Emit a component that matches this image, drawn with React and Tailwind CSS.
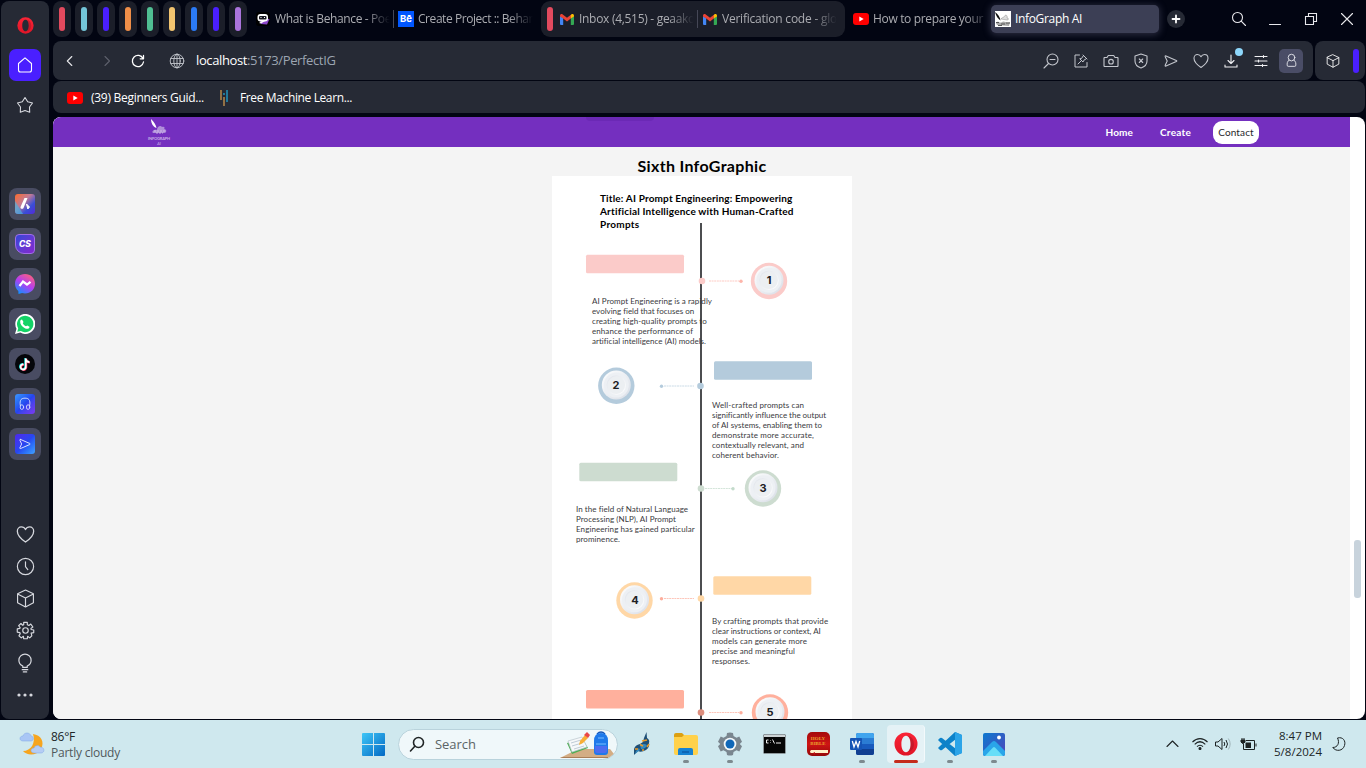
import React, { useLayoutEffect, useRef, useState } from "react";

/* Text run whose tracking is adjusted so that it fills the given width. */
function Fit({ w, className = "", children }) {
  const ref = useRef(null);
  const [sp, setSp] = useState(0);
  useLayoutEffect(() => {
    const natural = ref.current.getBoundingClientRect().width;
    setSp((w - natural) / children.length);
  }, [w, children]);
  return (
    <span ref={ref} className={`inline-block whitespace-pre ${className}`} style={{ letterSpacing: sp ? `${sp}px` : undefined }}>
      {children}
    </span>
  );
}

function Line({ size = 18, sw = 1.1, className = "", children, vb = 18 }) {
  return (
    <svg width={size} height={size} viewBox={`0 0 ${vb} ${vb}`} fill="none" stroke="currentColor" strokeWidth={sw} strokeLinecap="round" strokeLinejoin="round" className={`shrink-0 ${className}`}>
      {children}
    </svg>
  );
}

const Heart = ({ size }) => (
  <Line size={size}><path d="M9 15.500C4 12 2 9.500 2 6.200C2 4 3.600 2.500 5.400 2.500C7 2.500 8.300 3.300 9 4.800C9.700 3.300 11 2.500 12.600 2.500C14.400 2.500 16 4 16 6.200C16 9.500 14 12 9 15.500Z" /></Line>
);
const Cube = ({ size }) => (
  <Line size={size}><path d="M9 1L16.500 4.500V13L9 17L1.500 13V4.500ZM1.500 4.700L9 8.500L16.500 4.700M9 8.500V17" /></Line>
);
const Send = ({ size, className }) => (
  <Line size={size} className={className}><path d="M4 3.900L14.300 8.400C15 8.800 15 9.200 14.300 9.600L4 14.100C3.400 14.300 3 13.900 3.200 13.300L5.200 9L3.200 4.700C3 4.100 3.400 3.700 4 3.900Z" /></Line>
);
const OperaRing = ({ size }) => (
  <svg width={size} height={size} viewBox="0 0 24 24">
    <defs><linearGradient id="og" x1="0" y1="0" x2="0" y2="1"><stop stopColor="#fa2436" /><stop offset="1" stopColor="#e01527" /></linearGradient></defs>
    <path fillRule="evenodd" fill="url(#og)" d="M12 .5a11.500 11.500 0 1 0 0 23a11.500 11.500 0 1 0 0-23ZM12 3.800c3 0 4.600 3.700 4.600 8.200s-1.600 8.200-4.600 8.200s-4.600-3.700-4.600-8.200s1.600-8.200 4.600-8.200Z" />
    <path fill="#8f1422" opacity=".4" d="M13.500 4.200c2 .8 3.100 4 3.100 7.800s-1.100 7-3.100 7.800c3.500.6 6.500-3 6.500-7.800s-3-8.400-6.500-7.800Z" />
  </svg>
);
const YouTube = () => (
  <svg width="16" height="12" viewBox="0 0 16 12" className="shrink-0"><rect width="16" height="12" rx="3" fill="#f00" /><path d="M6.300 3.500L10.700 6L6.300 8.500Z" fill="#fff" /></svg>
);
const Gmail = () => (
  <svg width="14" height="11" viewBox="0 0 14 11" className="shrink-0">
    <path d="M0 2V10a1 1 0 0 0 1 1H3.200V4.300Z" fill="#4285f4" /><path d="M14 2V10a1 1 0 0 1-1 1H10.800V4.300Z" fill="#34a853" />
    <path d="M0 1.800C0 .2 1.600-.4 2.700.5L7 3.700L11.300.5L10.800 4.600L7 7.500L3.200 4.600L0 2.500Z" fill="#ea4335" /><path d="M10.800 4.600V.9L11.300.5C12.400-.4 14 .2 14 1.800V2.500Z" fill="#fbbc04" />
  </svg>
);
const SiteIcon = () => (
  <svg width="16" height="16" viewBox="0 0 16 16" className="shrink-0"><rect width="16" height="16" fill="#fff" /><path d="M0 1C3 3 5 6 5.500 9.500C3 8 1 5 0 1Z" fill="#111" /><path d="M6 8C7 6 8 7 9 6C10 3 13 4 12 7C14 7 14 9 12 9Z" fill="#ddd" stroke="#888" strokeWidth=".5" /><path d="M1 12C3 9 5 13 7 11C9 9 12 13 15 11L14 15L2 14Z" fill="#aaa" /><path d="M1 11.500H4M6 13H10M11 12H15M3 14.500H7" stroke="#555" /></svg>
);

const BARS = ["bg-[#e24a5e]", "bg-[#74c5d8]", "bg-[#4a1fff]", "bg-[#ef8e48]", "bg-[#50bf93]", "bg-[#f2c46f]", "bg-[#2b7bf6]", "bg-[#4a1fff]", "bg-[#aa74dc]"];

const Fade = ({ w, children, cls = "w-[116px]" }) => (
  <div className={`overflow-hidden whitespace-nowrap text-[#abacb1] [mask-image:linear-gradient(to_right,black_78%,transparent_99%)] ${cls}`}><Fit w={w}>{children}</Fit></div>
);

function TabStrip() {
  return (
    <div className="flex h-[41px] items-start pt-px text-[12px]">
      <div className="flex gap-1">
        {BARS.map((c, i) => (
          <div key={i} className="flex h-9 w-[18px] items-center justify-center rounded-[8px] bg-[#1b1e29]"><div className={`h-6 w-1.5 rounded-[3px] ${c}`} /></div>
        ))}
      </div>
      <div className="flex h-9 w-[147px] items-center gap-[5px] pl-[9px]">
        <svg width="14" height="14" viewBox="0 0 14 14" className="shrink-0"><rect width="14" height="14" rx="3" fill="#000" /><path d="M3 6L13.500 7L11 12.500L5 12Z" fill="#8b46c9" /><rect x="1.500" y="2" width="10.500" height="7.500" rx="3" fill="#fff" /><path d="M3 11L6 9H9L5 11.500Z" fill="#fff" /><rect x="3" y="4" width="7.500" height="3.500" rx="1" fill="#1a1a22" /><path d="M4.500 5.500H5.500M8 5.500H9" stroke="#fff" /></svg>
        <Fade w={116}>What is Behance - Poe</Fade>
        <div className="-ml-[3px] h-[18px] w-px shrink-0 bg-[#454756]" />
      </div>
      <div className="flex h-9 w-[147px] items-center gap-1 pl-1">
        <div className="flex size-4 shrink-0 items-center justify-center bg-[#0057ff] font-['Inter',sans-serif] text-[9.500px] font-bold text-white">Bē</div>
        <Fade w={115}>Create Project :: Behar</Fade>
      </div>
      <div className="flex h-9 w-[304px] items-center rounded-[9px] bg-[#1b1e29] pl-1.5">
        <div className="mr-[7px] h-6 w-1.5 rounded-[3px] bg-[#e24a5e]" />
        <div className="flex items-center gap-[5px]"><Gmail /><Fade w={116}>Inbox (4,515) - geaako</Fade></div>
        <div className="ml-[2px] mr-[5px] h-[18px] w-px bg-[#454756]" />
        <div className="flex items-center gap-[5px]"><Gmail /><Fade w={115}>Verification code - glo</Fade></div>
      </div>
      <div className="flex h-9 w-[146px] items-center gap-1 pl-2"><YouTube /><Fade w={110} cls="w-[120px]">How to prepare your</Fade></div>
      <div className="mt-1 flex h-7 w-[168px] items-center gap-1 rounded-[5px] bg-[#3c3f55] pl-1 text-white shadow-[0_1px_7px_1px_rgba(90,92,120,0.45)]"><SiteIcon /><Fit w={67}>InfoGraph AI</Fit></div>
      <div className="ml-2 mt-[9px] flex size-[18px] items-center justify-center rounded-full bg-[#262a35] text-white"><Line size={10} vb={10} sw={1.800}><path d="M5 1.500V8.500M1.500 5H8.500" /></Line></div>
      <div className="ml-[45px] mt-[9px] flex gap-[18px] text-[#e8e8ec]">
        <Line><circle cx="7.500" cy="7.500" r="5" /><path d="M11.200 11.200L15.500 15.500" /></Line>
        <Line><path d="M3.500 14.500H14.500" /></Line>
        <Line><path d="M3.500 6.500H11.500V14.500H3.500ZM6.500 6V3.500H14.500V11.500H12" strokeLinejoin="miter" /></Line>
        <Line><path d="M3.500 3.500L14.500 14.500M14.500 3.500L3.500 14.500" /></Line>
      </div>
    </div>
  );
}

function Toolbar() {
  const cell = "flex w-[30px] items-center justify-center";
  return (
    <div className="flex h-[39px] gap-0.5">
      <div className="flex w-[1260px] items-center rounded-[8px] bg-[#262a35] text-[#c3c6cd]">
        <Line className="ml-2 text-[#e6e7ea]"><path d="M10.800 4.500L6.300 9L10.800 13.500" /></Line>
        <Line className="ml-[19px] text-[#5d606b]"><path d="M7 4.500L11.500 9L7 13.500" /></Line>
        <Line className="ml-[13px] text-white" sw={1.300}><path d="M14 6.500A5.600 5.600 0 1 0 14.500 10M14.500 3.500V6.800H11.200" /></Line>
        <Line className="ml-[21px]" sw={0.900}><circle cx="9" cy="9" r="6.800" /><ellipse cx="9" cy="9" rx="3.200" ry="6.800" /><path d="M2.800 6.500H15.200M2.800 11.500H15.200M9 2V16" /></Line>
        <div className="ml-2.5 flex text-[13px]"><Fit w={51} className="text-white">localhost</Fit><Fit w={88.500} className="text-[#9ca5b2]">:5173/PerfectIG</Fit></div>
        <div className="ml-auto mr-[7px] flex">
          <div className={cell}><Line><circle cx="10.500" cy="7.500" r="5.500" /><path d="M8 7.500H13M6.500 11.500L2 16" /></Line></div>
          <div className={cell}><Line sw={1}><path d="M7.500 3H3V15H15V10.500M6 12L9 9M8 7L11 10L11.800 8.300L14.500 6.500L11.500 3.500L9.700 6.200ZM11 3L15 7" /></Line></div>
          <div className={cell}><Line><path d="M2.500 5.500H5L6.300 3.500H11.700L13 5.500H15.500L16 6V14L15.500 14.500H2.500L2 14V6Z" /><circle cx="9" cy="9.700" r="2.300" /></Line></div>
          <div className={cell}><Line><path d="M9 2L15 4V9C15 12.500 12 15 9 16C6 15 3 12.500 3 9V4ZM7.300 7L10.700 10.500M10.700 7L7.300 10.500" /></Line></div>
          <div className={cell}><Send /></div>
          <div className={cell}><Heart /></div>
          <div className={`${cell} relative text-[#f0f0f3]`}><Line><path d="M9 3V11M6 8.500L9 11.500L12 8.500M3 13V15H15V13" /></Line><span className="absolute left-[19px] -top-[1px] size-2 rounded-full bg-[#8ed7fb]" /></div>
          <div className={`${cell} text-[#f0f0f3]`}><Line><path d="M3 4.500H15M3 9H15M3 13.500H15M11.500 3.500V5.500M6.500 8V10M10.500 12.500V14.500" /></Line></div>
          <div className={cell}><div className="flex size-6 items-center justify-center rounded-[5px] bg-[#4a4d66] text-[#e6e7ec]"><Line size={15}><circle cx="9" cy="5.500" r="4" /><path d="M6 8.500C4 10 3.300 12.500 4 15.500Q4.300 16 5 16H13Q13.700 16 14 15.500C14.700 12.500 14 10 12 8.500" /></Line></div></div>
        </div>
      </div>
      <div className="flex flex-1 items-center rounded-[8px] bg-[#262a35] pl-[11px] text-white"><Cube size={14} /><div className="ml-[13px] h-6 w-1.5 rounded-[3px] bg-[#4a1fff]" /></div>
    </div>
  );
}

function Bookmarks() {
  return (
    <div className="mt-px flex h-8 items-center rounded-[8px] bg-[#262a35] pt-px text-[12px] text-white">
      <div className="ml-[14px] mr-2"><YouTube /></div>
      <Fit w={113}>(39) Beginners Guid...</Fit>
      <svg width="8" height="16" viewBox="0 0 8 16" className="ml-4 mr-3"><path d="M1 0V10" stroke="#b78a4b" strokeWidth="1.500" /><path d="M4 7V16" stroke="#b78a4b" strokeWidth="1.500" /><path d="M4 3V5" stroke="#2295bd" strokeWidth="1.500" /><path d="M7 0V12" stroke="#2295bd" strokeWidth="1.500" /></svg>
      <Fit w={112}>Free Machine Learn...</Fit>
    </div>
  );
}

const APP = "flex h-8 w-8 items-center justify-center rounded-[8px] bg-[#494c62]";
function Sidebar() {
  const row = "flex h-8 items-center justify-center";
  return (
    <aside className="mb-px ml-px mt-px flex w-12 shrink-0 flex-col items-center rounded-[8px] bg-[#262a35] text-[#d6d8de]">
      <div className={`${row} mt-2`}><OperaRing size={17} /></div>
      <div className={`${row} mt-2 w-8 rounded-[7px] bg-[#4a1fff] text-white`}><Line><path d="M2.500 7.500L9 1.800L15.500 7.500V14A2 2 0 0 1 13.500 16H4.500A2 2 0 0 1 2.500 14Z" /></Line></div>
      <div className={`${row} mt-2`}><Line><path d="M9 1.500L11.700 5.700L16.500 7L13.500 11L13.700 16.200L9 14.500L4.300 16.200L4.500 11L1.500 7L6.300 5.700Z" /></Line></div>
      <div className="mt-[67px] flex flex-col gap-2">
        <div className={APP}>
          <svg width="20" height="20" viewBox="0 0 20 20"><defs><linearGradient id="ar" x1="0" y1="0" x2="1" y2="1"><stop stopColor="#ff6b2b" /><stop offset=".4" stopColor="#c37b94" /><stop offset=".7" stopColor="#3a4fd6" /><stop offset="1" stopColor="#5428d9" /></linearGradient></defs><rect width="20" height="20" rx="3" fill="url(#ar)" /><path d="M0 7L8 20H3A3 3 0 0 1 0 17Z" fill="#4cb0df" opacity=".7" /><path d="M9.500 4H12.500L8.500 14C8 15.500 5 15 5.500 13Z" fill="#fff" /><path d="M11.500 10L14.500 13L12.800 15Z" fill="#fff" stroke="#fff" strokeLinejoin="round" /></svg>
        </div>
        <div className={APP}><div className="flex size-5 items-center justify-center rounded-[4px] rounded-bl-[9px] border border-[#a16ee8] bg-linear-to-br from-[#2d46d8] to-[#8423cf] font-['Inter',sans-serif] text-[8.500px] font-extrabold italic text-white">CS</div></div>
        <div className={APP}>
          <svg width="20" height="20" viewBox="0 0 20 20"><defs><linearGradient id="ms" x1=".8" y1="0" x2=".2" y2="1"><stop stopColor="#ff6277" /><stop offset=".5" stopColor="#b43df3" /><stop offset="1" stopColor="#0895ff" /></linearGradient></defs><path d="M10 0C15.700 0 20 4.200 20 9.700S15.700 19.400 10 19.400L7 19L3.500 20L3.300 17C1.200 15 0 12.500 0 9.700C0 4.200 4.300 0 10 0Z" fill="url(#ms)" /><path d="M4.500 12L8 7.500L12 10.500L15.500 7.800" stroke="#fff" strokeWidth="2.200" fill="none" /></svg>
        </div>
        <div className={APP}>
          <svg width="20" height="20" viewBox="0 0 20 20"><path d="M0 20L1.500 14.700A10 10 0 1 1 5.300 18.600Z" fill="#fff" /><path d="M2.300 17.700L3.200 14.300A8.200 8.200 0 1 1 5.900 17Z" fill="#13d366" /><path d="M7 5.500L8.500 8L7.800 9.200C8.500 10.600 9.500 11.600 11 12.300L12.200 11.500L14.500 12.700C14.500 15 12 15.500 9.500 14C7 12.500 5 10 5.200 7.700C5.300 6.300 6 5.500 7 5.500Z" fill="#fff" /></svg>
        </div>
        <div className={APP}>
          <svg width="20" height="20" viewBox="0 0 20 20"><circle cx="10" cy="10" r="10" fill="#05060a" /><g fill="none" strokeWidth="2"><path d="M10.300 4V12.700A2.600 2.600 0 1 1 8 10M10.300 4.500C10.500 6.500 12 7.700 14 7.800" stroke="#25f4ee" /><path d="M11.300 4.800V13.500A2.600 2.600 0 1 1 9 10.700M11.300 5.300C11.500 7.300 13 8.500 15 8.600" stroke="#fe2c55" /><path d="M10.800 4.400V13.100A2.600 2.600 0 1 1 8.500 10.400M10.800 4.900C11 6.900 12.500 8.100 14.500 8.200" stroke="#fff" strokeWidth="1.700" /></g></svg>
        </div>
        <div className={APP}><div className="flex size-5 items-center justify-center rounded-[3px] bg-linear-to-br from-[#3d96ff] via-[#2644ee] to-[#7a39ef] text-[#dfe4ff]"><Line size={14}><path d="M3 11C1.500 3 5 1.500 9 1.500S16.500 3 15 11" /><ellipse cx="5" cy="13" rx="2.200" ry="3" /><ellipse cx="13" cy="13" rx="2.200" ry="3" /></Line></div></div>
        <div className={APP}><div className="flex size-5 items-center justify-center rounded-[3px] bg-linear-to-br from-[#4c25ed] via-[#2846f0] to-[#43a1ff] text-[#dfe4ff]"><Send size={16} /></div></div>
      </div>
      <div className="mt-[58px] flex flex-col">
        <div className={row}><Heart size={21} /></div>
        <div className={row}><Line size={19}><circle cx="9" cy="9" r="7.700" /><path d="M9 4.500V9.200L11.200 12" /></Line></div>
        <div className={row}><Cube size={19} /></div>
        <div className={row}><Line size={19}><path d="M7.300 3.500V1.300H10.700V3.500L12.200 4.200L14 2.900L16 5.700L14.200 7L14.300 8L16.800 8.500V11L14.300 11.500L14.500 12L15 14L13 16L11 14.500L10.700 16.800H7.300L7 14.500L5 16L2.800 14L4 12L3.700 11L1.200 10.500V7.500L3.700 7L3.900 6.200L2.500 4.500L4.700 2.400L6.300 4Z" /><circle cx="9" cy="9" r="2.600" /></Line></div>
        <div className={`${row} pt-px`}><Line size={20}><path d="M7 13V11.700C4.300 10.500 3.500 8.500 3.500 6.500A5.500 5.500 0 0 1 14.500 6.500C14.500 8.500 13.700 10.500 11 11.700V13ZM6.500 15H11.500M7.500 17H10.500" /></Line></div>
        <div className={`${row} pt-px`}><svg width="16" height="4" viewBox="0 0 16 4" fill="currentColor"><circle cx="2" cy="2" r="1.600" /><circle cx="8" cy="2" r="1.600" /><circle cx="14" cy="2" r="1.600" /></svg></div>
      </div>
    </aside>
  );
}

/* Timeline coordinates are relative to the 300px wide card. */
const STEPS = [
  { n: 1, color: "#fbcbc9", tip: "#fdb5aa", bar: [34, 78.700], ring: [217, 105], dot: [150, 105], line: [157, 187, 189], text: [40, 120], lines: [["AI Prompt Engineering is a rapidly", 120], ["evolving field that focuses on", 102], ["creating high-quality prompts to", 115], ["enhance the performance of", 101], ["artificial intelligence (AI) models.", 114]] },
  { n: 2, color: "#b4cbdc", tip: "#b4cbdc", bar: [162, 185.300], ring: [64.300, 209.800], dot: [148.500, 210], line: [112, 142, 109.500], text: [160, 224], lines: [["Well-crafted prompts can", 92], ["significantly influence the output", 114], ["of AI systems, enabling them to", 110], ["demonstrate more accurate,", 102], ["contextually relevant, and", 92], ["coherent behavior.", 67]] },
  { n: 3, color: "#cddcd0", tip: "#c3dbcb", bar: [27.300, 286.800], ring: [211, 312.500], dot: [149, 312.500], line: [153, 180, 181], text: [24, 328], lines: [["In the field of Natural Language", 112], ["Processing (NLP), AI Prompt", 100], ["Engineering has gained particular", 119], ["prominence.", 44]] },
  { n: 4, color: "#ffd7a6", tip: "#fdae9d", bar: [161.300, 400.300], ring: [82.500, 424.500], dot: [149, 422.500], line: [112, 142, 109.500], text: [160, 440], lines: [["By crafting prompts that provide", 116], ["clear instructions or context, AI", 109], ["models can generate more", 95], ["precise and meaningful", 83], ["responses.", 38]] },
  { n: 5, color: "#ffb09d", dotColor: "#dd8e7e", tip: "#fdae9d", bar: [34, 514], ring: [218, 536.500], dot: [149, 536.500], line: [157, 187, 189], text: [40, 560], lines: [] },
];

function Infographic() {
  return (
    <div className="relative h-[543px] w-[300px] overflow-hidden bg-white">
      <svg width="300" height="543" viewBox="0 0 300 543" className="absolute inset-0">
        <defs>
          <linearGradient id="soft" x1="0" y1="0" x2="1" y2="1"><stop stopColor="#dfe3ea" /><stop offset="1" stopColor="#fff" /></linearGradient>
          <linearGradient id="soft2" x1="0" y1="0" x2="1" y2="1"><stop stopColor="#fff" /><stop offset="1" stopColor="#d8dde6" /></linearGradient>
        </defs>
        <rect x="148" y="47" width="2" height="496" fill="#4c4d50" />
        {STEPS.map((s) => (
          <g key={s.n}>
            <rect x={s.bar[0]} y={s.bar[1]} width="98" height="18.500" rx="1.500" fill={s.color} />
            <circle cx={s.ring[0]} cy={s.ring[1]} r="18.200" fill={s.color} />
            <circle cx={s.ring[0]} cy={s.ring[1] - 0.7} r="14.500" fill="url(#soft2)" />
            <circle cx={s.ring[0]} cy={s.ring[1] - 0.7} r="12.500" fill="#edf0f4" />
            <circle cx={s.ring[0]} cy={s.ring[1] - 0.7} r="9.800" fill="url(#soft)" />
            <circle cx={s.ring[0]} cy={s.ring[1] - 0.7} r="8.800" fill="#eceff2" />
            <circle cx={s.dot[0]} cy={s.dot[1]} r="3.300" fill={s.dotColor || s.color} />
            <path d={`M${s.line[0]} ${s.dot[1]}H${s.line[1]}`} stroke={s.tip} strokeWidth="1" strokeDasharray="2 .6" opacity=".7" />
            <circle cx={s.line[2]} cy={s.dot[1] + 0.2} r="1.700" fill={s.tip} />
          </g>
        ))}
      </svg>
      {STEPS.map((s) => (
        <React.Fragment key={s.n}>
          <div className="absolute w-5 text-center font-['Inter',sans-serif] text-[11px] font-bold leading-[12px] text-[#202124]" style={{ left: Math.round(s.ring[0] - 10), top: Math.ceil(s.ring[1] - 7) }}>{s.n}</div>
          <div className="absolute font-['Lato',sans-serif] text-[8px] leading-[10px] text-[#3a3a40]" style={{ left: s.text[0], top: s.text[1] }}>
            {s.lines.map(([t, w]) => <div key={t} className="flex h-[10px] whitespace-nowrap"><Fit w={w}>{t}</Fit></div>)}
          </div>
        </React.Fragment>
      ))}
      <div className="absolute left-[48px] top-[16px] font-['Lato',sans-serif] text-[10px] font-bold leading-[13px] text-black">
        <div className="flex"><Fit w={192.500}>Title: AI Prompt Engineering: Empowering</Fit></div>
        <div className="flex"><Fit w={193.500}>Artificial Intelligence with Human-Crafted</Fit></div>
        <div className="flex"><Fit w={39.500}>Prompts</Fit></div>
      </div>
    </div>
  );
}

function Page() {
  return (
    <div className="mt-1 flex h-[602px] overflow-hidden rounded-[8px] bg-white">
      <div className="flex w-[1297px] flex-col bg-[#f4f4f4]">
        <header className="relative flex h-[30px] shrink-0 items-center bg-[#742fbf] font-['Lato',sans-serif] text-[10px] text-white">
          <div className="absolute left-[533px] top-0 h-1 w-[68px] rounded-b-[5px] bg-[#6b29b5]" />
          <div className="ml-[94px] flex w-6 flex-col items-center pt-px">
            <svg width="24" height="17" viewBox="0 0 24 17"><path d="M4 0C7 3 9 6 9.500 9C6 8 4 4 4 0Z" fill="#fff" /><path d="M6 14C4 12 8 10 10 11C10 7 14 6 15 8C18 7 18 10 17 10C20 10 20 14 17 14Z" fill="#b08fda" /><path d="M7 12H18M9 14H16" stroke="#d8c5ee" strokeWidth=".8" strokeDasharray="2 1" /></svg>
            <Fit w={22} className="text-[4px] font-bold leading-[5px] text-[#c9b0e6]">INFOGRAPH</Fit>
            <span className="text-[4px] italic leading-[5px] text-[#c9b0e6]">AI</span>
          </div>
          <nav className="ml-auto mr-[91px] flex items-center">
            <Fit w={27.500} className="font-bold">Home</Fit>
            <Fit w={31} className="ml-[27px] font-bold">Create</Fit>
            <div className="ml-[22px] flex h-[23px] w-[46px] items-center justify-center rounded-[9px] bg-white text-[#27272b]"><Fit w={35.500}>Contact</Fit></div>
          </nav>
        </header>
        <main className="flex flex-col items-center pl-px">
          <h1 className="mt-[9px] h-5 font-['Lato',sans-serif] text-[16px] font-bold leading-5 text-black"><Fit w={129}>Sixth InfoGraphic</Fit></h1>
          <Infographic />
        </main>
      </div>
      <div className="flex w-[15px] flex-col items-center"><div className="mt-[423px] h-[58px] w-[7px] rounded-[3px] bg-[#c8d3dc]" /></div>
    </div>
  );
}

function TaskIcon({ children, mark, active }) {
  return (
    <div className="relative flex h-[38px] w-11 items-center justify-center">
      {active && <div className="absolute left-[3px] top-0 h-[38px] w-[38px] rounded-[4px] border-r border-[#f3f9fb] bg-[#e5f2f6]" />}
      <div className="relative">{children}</div>
      {mark && <div className={`absolute bottom-0 h-[3px] rounded-full ${active ? "w-6 bg-[#c42b1c]" : "w-1.5 bg-[#7d8a8f]"}`} />}
    </div>
  );
}

function Taskbar() {
  return (
    <footer className="flex h-[48px] items-center bg-[#cfe8ee] text-[#202526]">
      <svg width="26" height="26" viewBox="0 0 26 26" className="ml-[19px]">
        <path d="M14 3C22 4 26 11 22 18C18 25 8 25 4 20C12 20 17 12 14 3Z" fill="#f7a51e" />
        <path d="M4 10C0 10 0 5 4 5C5 1 11 1 12 5C15 5 15 10 12 10Z" fill="#a9c6f5" stroke="#7da4e6" strokeWidth=".5" />
        <path d="M15 22C11 22 11 17 15 17C16 14 20 14 21 16C26 16 26 22 22 22Z" fill="#b5cdf4" stroke="#7da4e6" strokeWidth=".5" />
      </svg>
      <div className="ml-[6px] flex flex-col pt-[2px] text-[12px] leading-4"><div className="flex"><Fit w={24}>86°F</Fit></div><div className="flex text-[#50595c]"><Fit w={69}>Partly cloudy</Fit></div></div>
      <svg width="23" height="23" viewBox="0 0 23 23" className="ml-[242px]"><defs><linearGradient id="wn" x1="0" y1="0" x2="1" y2="1"><stop stopColor="#3fc6f7" /><stop offset="1" stopColor="#0269c4" /></linearGradient></defs><path fill="url(#wn)" d="M1 0H11V11H0V1Q0 0 1 0ZM12 0H22Q23 0 23 1V11H12ZM0 12H11V23H1Q0 23 0 22ZM12 12H23V22Q23 23 22 23H12Z" /></svg>
      <div className="ml-[13px] flex h-[31px] w-[220px] items-center overflow-hidden rounded-full border border-[#b9d3dc] bg-[#f0f8fa] pl-[9px]">
        <Line size={18} sw={1.600}><circle cx="10.500" cy="7.500" r="5" /><path d="M6.800 11.300L2.500 16" /></Line>
        <Fit w={41} className="ml-[9px] pt-px text-[13px] text-[#5b6466]">Search</Fit>
        <svg width="54" height="29" viewBox="0 0 54 29" className="ml-auto mr-[3px]">
          <path d="M0 28L18 19H50L54 24L50 28Z" fill="#d3ad84" /><path d="M0 28H48V27H3Z" fill="#a97e57" />
          <path d="M7 13L22 8L28 18L12 24Z" fill="#4fae55" /><path d="M8 11L22 7L27 17L12 22Z" fill="#f6f8fa" stroke="#b9c5cc" strokeWidth=".7" /><path d="M11 13L21 10M12 16L22 13M14 19L24 16" stroke="#a8b8c5" strokeWidth=".7" />
          <path d="M19 15L20 11L25 5L28 8L23 13Z" fill="#f8ae35" /><path d="M24 5L27 2L30 5L28 8Z" fill="#e94848" />
          <path d="M37 4Q41 0 45 4" fill="none" stroke="#1455b8" strokeWidth="1.500" /><path d="M34 11Q34 3 41 3T48 11V22Q48 25 45 25H37Q34 25 34 22Z" fill="#1e79ea" /><path d="M35 16H47V21Q47 23 45 23H37Q35 23 35 21Z" fill="#4c6cf0" /><path d="M38 8H44M36 14H46" stroke="#78bfff" />
        </svg>
      </div>
      <div className="ml-[2px] flex">
        <TaskIcon><svg width="18" height="24" viewBox="0 0 18 24"><path d="M11 6L13.500 0L14 6Q17 8 16 11Q17 15 13 18Q8 21 5 19L1 23V17Q2 13 7 12L10 10Z" fill="#1e4f76" /><path d="M7 13Q11 11 14 13Q13 17 8 17ZM3 19L6 16L7 18L2 22Z" fill="#3489bd" /><path d="M9 9L14 8M2 17H5M7 12.500L10 14M14 15L16 12M9 18H11" stroke="#eb9b28" strokeWidth="1.500" /></svg></TaskIcon>
        <TaskIcon mark><svg width="24" height="22" viewBox="0 0 24 22"><path d="M0 2Q0 0 2 0H8L10 2H14V6H0Z" fill="#dca013" /><path d="M0 4H8L10 2H22Q24 2 24 4V20Q24 22 22 22H2Q0 22 0 20Z" fill="#ffd14b" /><path d="M4 22V17Q4 15 6 15H17Q19 15 19 17V22Z" fill="#1682d3" /><path d="M8 19H15" stroke="#0c5cab" strokeWidth="1.500" /></svg></TaskIcon>
        <TaskIcon mark><svg width="24" height="24" viewBox="0 0 24 24"><path d="M8.500 4L9 1Q12 0 15 1L15.500 4L18.500 5.700L21.300 4.500L24 9.700L21.800 12L24 14.300L21.300 19.500L18.500 18.300L15.500 20L15 23Q12 24 9 23L8.500 20L5.500 18.300L2.700 19.500L0 14.300L2.200 12L0 9.700L2.700 4.500L5.500 5.700Z" fill="#7a868f" /><circle cx="12" cy="12" r="6.300" fill="#f4f8fa" /><circle cx="12" cy="12" r="4.500" fill="#1067b8" /></svg></TaskIcon>
        <TaskIcon><svg width="23" height="20" viewBox="0 0 23 20"><rect x=".5" y=".5" width="22" height="19" rx="1" fill="#060606" stroke="#8f999d" /><rect x="1" y="1" width="21" height="2" fill="#cdd3d5" /><path d="M5.500 6H3.500V9H5.500M7.500 6.500V7M7.500 8.500V9M9.500 5.500L11.500 9.500M13 9H18" stroke="#eee" fill="none" /></svg></TaskIcon>
        <TaskIcon><div className="relative flex h-6 w-[23px] flex-col items-center overflow-hidden rounded-[5px] bg-linear-to-b from-[#a40b0b] via-[#cf1515] to-[#960909] pt-[5px] font-['Liberation_Serif',serif] text-[5px] font-bold leading-[4.500px] text-[#e7a02c]"><span>HOLY</span><span>BIBLE</span><svg width="23" height="6" viewBox="0 0 23 6" className="mt-[3px]"><path d="M4 1H21V4H4Q2 3 4 1Z" fill="#fff1c9" /><path d="M6 4L8 3L8 6Z" fill="#c01010" /></svg></div></TaskIcon>
        <TaskIcon mark><svg width="24" height="22" viewBox="0 0 24 22"><rect x="6" width="18" height="22" rx="2" fill="#185abd" /><path d="M6 2Q6 0 8 0H22Q24 0 24 2V5.500H6Z" fill="#41a5ee" /><path d="M6 5.500H24V11H6Z" fill="#2b7cd3" /><path d="M6 16H24V20Q24 22 22 22H8Q6 22 6 20Z" fill="#103f91" /><rect y="5" width="12" height="12" rx="1" fill="#1554b5" /><path d="M2.300 8L4 14L6 8.500L8 14L9.700 8" stroke="#fff" strokeWidth="1.300" fill="none" /></svg></TaskIcon>
        <TaskIcon mark active><OperaRing size={24} /></TaskIcon>
        <TaskIcon mark><svg width="24" height="24" viewBox="0 0 24 24"><path d="M17 0L24 3V21L17 24L2 10L0 8L2 6Q3 5.500 4 6L18 17V7L4 18Q3 18.500 2 18L0 16L2 14Z" fill="#0d82c9" /><path d="M17 0L24 3V21L17 24Z" fill="#2ba4e8" /></svg></TaskIcon>
        <TaskIcon mark><svg width="22" height="23" viewBox="0 0 22 23"><defs><linearGradient id="ph" x1="0" y1="0" x2="1" y2="1"><stop stopColor="#0c79cf" /><stop offset="1" stopColor="#5145ba" /></linearGradient></defs><rect width="22" height="23" rx="2" fill="url(#ph)" /><path d="M0 18L9 9Q11 7 13 9L22 18V21Q22 23 20 23H2Q0 23 0 21Z" fill="#2aa5e9" /><path d="M2 23L10 14.500Q11 13.500 12 14.500L20 23Z" fill="#67def8" /><circle cx="16" cy="4.500" r="1.900" fill="#fff" /></svg></TaskIcon>
      </div>
      <div className="ml-auto mr-[20px] flex items-center">
        <Line size={18}><path d="M4 11.500L9.500 6L15 11.500" /></Line>
        <svg width="16" height="14" viewBox="0 0 16 14" fill="none" stroke="#1c2223" strokeWidth="1.100" className="ml-[11px]"><path d="M.5 5C5 .5 11 .5 15.500 5M2.700 7.300C6 4 10 4 13.300 7.300M5 9.700C7 7.700 9 7.700 11 9.700" /><circle cx="8" cy="11.500" r="1" fill="#1c2223" /></svg>
        <svg width="16" height="14" viewBox="0 0 16 14" fill="none" stroke="#1c2223" className="ml-[7px]"><path d="M.5 5H3L7 1.500V12.500L3 9H.5ZM9 5Q10.500 7 9 9M11 3Q14 7 11 11" /><path d="M13.300 1.500Q17 7 13.300 12.500" stroke="#9eb2b7" /></svg>
        <svg width="17" height="13" viewBox="0 0 17 13" fill="none" stroke="#1c2223" className="ml-[9px]"><path d="M6 2.500H14.500V11.500H3.500V6M16 5.500V8.500" /><path d="M1 2H5V4L3.500 5.500H2.500L1 4ZM2 0V2M4 0V2" fill="#1c2223" /><rect x="6" y="5" width="4.500" height="4.500" fill="#1c2223" /></svg>
        <div className="ml-[17px] mr-px flex flex-col items-end text-[11.500px] leading-4"><Fit w={43}>8:47 PM</Fit><Fit w={48}>5/8/2024</Fit></div>
        <svg width="14" height="14" viewBox="0 0 14 14" fill="none" stroke="#1c2223" className="ml-[9px]"><path d="M5.500 1C11 -.5 14 4 12.500 8.500C11 14 4 15 .8 10.500C5.500 10.500 8 6 5.500 1Z" /></svg>
      </div>
    </footer>
  );
}

export default function App() {
  return (
    <div className="flex h-[768px] w-[1366px] flex-col overflow-hidden bg-[#020512] font-['Open_Sans','Noto_Sans',sans-serif]">
      <div className="flex h-[720px]">
        <Sidebar />
        <div className="ml-1 flex w-[1312px] flex-col">
          <TabStrip />
          <Toolbar />
          <Bookmarks />
          <Page />
        </div>
      </div>
      <Taskbar />
    </div>
  );
}
